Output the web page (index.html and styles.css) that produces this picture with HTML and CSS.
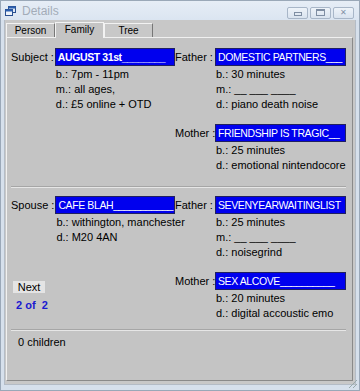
FILE: index.html
```html
<!DOCTYPE html>
<html lang="en">
<head>
    <meta charset="UTF-8">
    <title>Details</title>
    <link rel="stylesheet" href="styles.css">
</head>
<body>
    <div class="window">
        <div class="titlebar">
            <svg class="app-icon" width="11" height="10" viewBox="0 0 11 10">
                <rect x="3.5" y="0.5" width="7" height="6" fill="#dfe8f4" stroke="#2a4f8f"/>
                <rect x="3.5" y="0.5" width="7" height="2" fill="#2a5fb0"/>
                <rect x="0.5" y="3.5" width="7" height="6" fill="#eef3fa" stroke="#2a4f8f"/>
                <rect x="0.5" y="3.5" width="7" height="2" fill="#2a5fb0"/>
            </svg>
            <span class="title">Details</span>
            <div class="controls">
                <span class="ctl"><i class="min"></i></span>
                <span class="ctl"><i class="max"></i></span>
                <span class="ctl"><i class="close">&#x2715;</i></span>
            </div>
        </div>

        <div class="frame">
            <div class="tabs">
                <span class="tab">Person</span>
                <span class="tab active">Family</span>
                <span class="tab">Tree</span>
            </div>

            <div class="panel">
                <!-- parents of subject -->
                <div class="section top">
                    <div class="col left">
                        <div class="person">
                            <span class="label">Subject :</span>
                            <div class="info">
                                <div class="name bold">AUGUST 31st________</div>
                                <div class="line">b.: 7pm - 11pm</div>
                                <div class="line">m.: all ages,</div>
                                <div class="line">d.: £5 online + OTD</div>
                            </div>
                        </div>
                    </div>
                    <div class="col right">
                        <div class="person">
                            <span class="label">Father :</span>
                            <div class="info">
                                <div class="name">DOMESTIC PARTNERS___</div>
                                <div class="line">b.: 30 minutes</div>
                                <div class="line">m.: __ ___ ____</div>
                                <div class="line">d.: piano death noise</div>
                            </div>
                        </div>
                        <div class="person mother">
                            <span class="label">Mother :</span>
                            <div class="info">
                                <div class="name">FRIENDSHIP IS TRAGIC__</div>
                                <div class="line">b.: 25 minutes</div>
                                <div class="line">d.: emotional nintendocore</div>
                            </div>
                        </div>
                    </div>
                </div>

                <div class="sep"></div>

                <!-- spouse and spouse parents -->
                <div class="section bottom">
                    <div class="col left">
                        <div class="person">
                            <span class="label">Spouse :</span>
                            <div class="info">
                                <div class="name">CAFE BLAH___________</div>
                                <div class="line">b.: withington, manchester</div>
                                <div class="line">d.: M20 4AN</div>
                            </div>
                        </div>
                        <div class="nav">
                            <button class="next">Next</button>
                            <div class="count">2 of&nbsp; 2</div>
                        </div>
                    </div>
                    <div class="col right">
                        <div class="person">
                            <span class="label">Father :</span>
                            <div class="info">
                                <div class="name">SEVENYEARWAITINGLIST</div>
                                <div class="line">b.: 25 minutes</div>
                                <div class="line">m.: __ ___ ____</div>
                                <div class="line">d.: noisegrind</div>
                            </div>
                        </div>
                        <div class="person mother">
                            <span class="label">Mother :</span>
                            <div class="info">
                                <div class="name">SEX ALCOVE__________</div>
                                <div class="line">b.: 20 minutes</div>
                                <div class="line">d.: digital accoustic emo</div>
                            </div>
                        </div>
                    </div>
                </div>

                <div class="sep last"></div>

                <div class="children">0 children</div>
            </div>
        </div>
        <div class="grip"></div>
    </div>
</body>
</html>
```

FILE: styles.css
```css
body {
    margin: 0;
    background: #d4dfec;
    font-family: "Liberation Sans", Arial, sans-serif;
    font-size: 11px;
    color: #000;
}

.window {
    width: 360px;
    height: 391px;
    display: flex;
    flex-direction: column;
    background: #d6e0ec;
    position: relative;
    box-sizing: border-box;
    border: 1px solid #9aa8b8;
}

.titlebar {
    height: 19px;
    display: flex;
    align-items: center;
    padding-left: 4px;
    background: linear-gradient(#e6edf6, #dbe5f1);
}

.app-icon {
    margin-right: 6px;
}

.title {
    color: #a3acb8;
    font-size: 12px;
}

.controls {
    margin-left: auto;
    margin-right: 5px;
    display: flex;
    gap: 2px;
    margin-top: 4px;
}

.ctl {
    width: 19px;
    height: 10px;
    border: 1px solid #a8b6c8;
    border-radius: 2px;
    background: linear-gradient(#eef3f9, #d9e3ef);
    display: flex;
    align-items: center;
    justify-content: center;
}

.ctl i {
    display: block;
    font-style: normal;
}

.ctl .min {
    width: 6px;
    height: 2px;
    border: 1px solid #7f8ea3;
    margin-top: 2px;
}

.ctl .max {
    width: 7px;
    height: 4px;
    border: 1px solid #7f8ea3;
    border-top-width: 2px;
}

.ctl .close {
    font-size: 8px;
    line-height: 8px;
    color: #8392a6;
}

.frame {
    flex: 1;
    display: flex;
    flex-direction: column;
    margin: 0 3px 5px 3px;
    padding: 0 2px 3px 1px;
    background: #c8c8c8;
    border: 1px solid #b4bcc6;
    border-top: none;
}

.tabs {
    display: flex;
    height: 16px;
    align-items: flex-end;
    padding-top: 1px;
}

.tab {
    width: 49px;
    height: 14px;
    box-sizing: border-box;
    border: 1px solid #f2f2f2;
    border-right-color: #777;
    border-bottom: none;
    background: #c8c8c8;
    font-size: 10px;
    text-align: center;
    line-height: 14px;
}

.tab.active {
    height: 16px;
    position: relative;
    top: 1px;
    border-right-color: #f2f2f2;
    line-height: 13px;
    background: #c4c4c4;
}

.panel {
    flex: 1;
    background: #c4c4c4;
    border: 1px solid #f0f0f0;
    border-right-color: #8a8a8a;
    border-bottom-color: #8a8a8a;
    padding: 10px 6px 0 4px;
}

.section {
    display: flex;
}

.col {
    display: flex;
    flex-direction: column;
}

.col.left {
    width: 164px;
}

.col.right {
    width: 171px;
}

.person {
    display: flex;
}

.label {
    line-height: 18px;
    padding-right: 1px;
    white-space: nowrap;
}

.right .label {
    width: 37px;
    text-align: right;
    padding-right: 3px;
}

.info {
    flex: 1;
    min-width: 0;
}

.name {
    height: 18px;
    line-height: 17px;
    box-sizing: border-box;
    border: 1px solid #202060;
    background: #0000ee;
    color: #fff;
    padding-left: 2px;
    white-space: nowrap;
    overflow: hidden;
    margin-bottom: 1px;
    font-size: 10.5px;
    letter-spacing: -0.4px;
}

.name.bold {
    font-weight: bold;
}

.line {
    line-height: 15px;
    padding-left: 1px;
    white-space: nowrap;
}

.mother {
    margin-top: 12px;
}

.top .mother .line:first-of-type {
    margin-top: 3px;
}

.sep {
    height: 0;
    border-top: 1px solid #a6a6a6;
    border-bottom: 1px solid #e6e6e6;
    margin: 9px 0 9px 0;
}

.top + .sep {
    margin-top: 13px;
    margin-bottom: 8px;
}

.nav {
    margin-top: 36px;
    padding-left: 2px;
}

.next {
    width: 32px;
    height: 12px;
    padding: 0;
    border: none;
    background: #e4e4e4;
    font-family: inherit;
    font-size: 11px;
    line-height: 12px;
    color: #000;
}

.count {
    margin-top: 6px;
    margin-left: 3px;
    color: #1a1ad0;
    font-weight: bold;
}

.sep.last {
    margin-top: 8px;
    margin-bottom: 4px;
}

.children {
    padding-left: 7px;
    line-height: 15px;
}

.grip {
    position: absolute;
    right: 2px;
    bottom: 2px;
    width: 8px;
    height: 8px;
    background: linear-gradient(135deg, transparent 45%, #9aa 45%, #9aa 55%, transparent 55%, transparent 70%, #9aa 70%, #9aa 80%, transparent 80%);
}
```
